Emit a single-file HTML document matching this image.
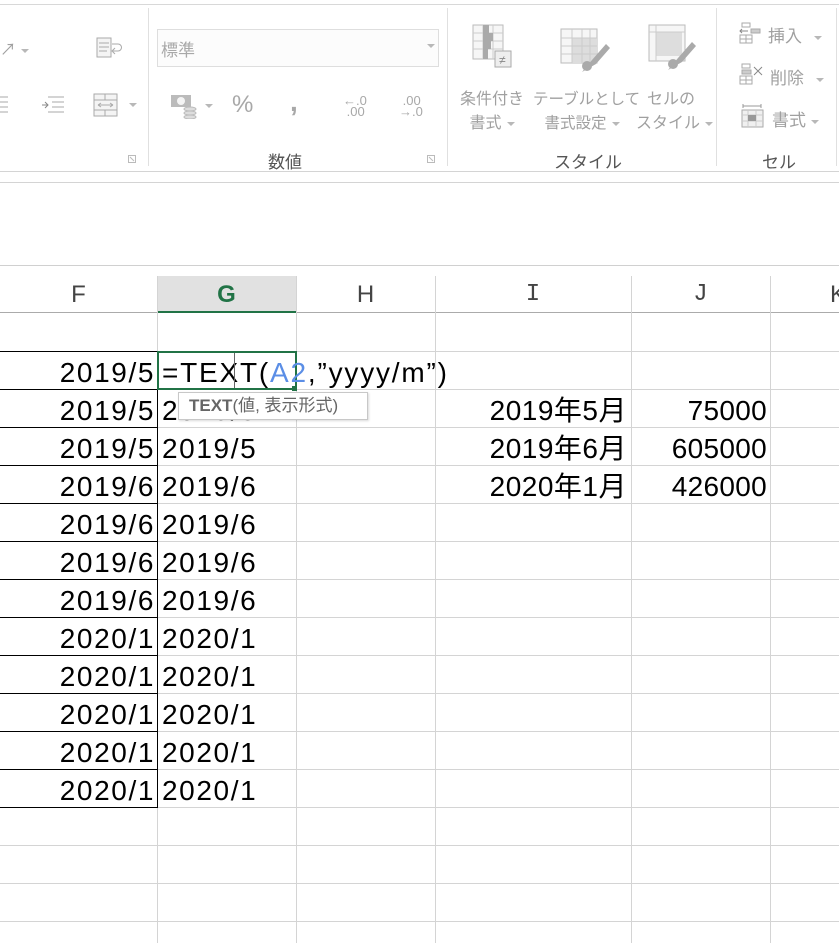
<!DOCTYPE html>
<html><head><meta charset="utf-8"><style>
*{margin:0;padding:0;box-sizing:border-box}
body{width:839px;height:943px;overflow:hidden;background:#fff;position:relative;font-family:"Liberation Sans","Noto Sans CJK JP",sans-serif}
.a{position:absolute}
.rb{color:#a0a0a0;font-size:16px;white-space:nowrap}
.hl{position:absolute;left:0;width:839px;height:1px;background:#d4d4d4}
.vl{position:absolute;width:1px;background:#d4d4d4}
.c{position:absolute;font-size:28px;color:#000;line-height:38px;white-space:nowrap;letter-spacing:1.6px}
.r{text-align:right}
.hd{position:absolute;top:276px;height:37px;line-height:37px;text-align:center;font-size:24px;color:#444}
.tri{display:inline-block;width:0;height:0;border-left:4px solid transparent;border-right:4px solid transparent;border-top:4px solid #b8b8b8;vertical-align:middle;margin-left:5px}
</style></head><body>
<div class="hl" style="top:4px;background:#d8d8d8"></div>
<div class="hl" style="top:171px;background:#d4d4d4"></div>
<div class="hl" style="top:182px;background:#d4d4d4"></div>
<div class="vl" style="left:148px;top:8px;height:158px;background:#e0e0e0"></div>
<div class="vl" style="left:447px;top:8px;height:158px;background:#e0e0e0"></div>
<div class="vl" style="left:716px;top:8px;height:158px;background:#e0e0e0"></div>
<div class="vl" style="left:836px;top:8px;height:158px;background:#e0e0e0"></div>
<div class="a rb" style="left:0;top:36px">↗<span class="tri"></span></div>
<svg class="a" style="left:96px;top:36px" width="28" height="24"><rect x="1" y="2" width="14" height="19" fill="#f4f4f4" stroke="#aaa"/><path d="M3 7h10M3 11h10M3 15h8M16 8h6a3 3 0 0 1 0 7h-5M19 12l-3 3 3 3" stroke="#aaa" fill="none"/></svg>
<svg class="a" style="left:0;top:94px" width="10" height="22"><path d="M0 3h8M0 8h8M0 13h8M0 18h8" stroke="#aaa"/></svg>
<svg class="a" style="left:40px;top:94px" width="26" height="22"><path d="M8 3h16M12 8h12M12 13h12M8 18h16" stroke="#aaa"/><path d="M2 11h6M5 8l3 3-3 3" stroke="#888" fill="none"/></svg>
<svg class="a" style="left:93px;top:93px" width="26" height="24"><rect x="1" y="1" width="23" height="22" fill="#f4f4f4" stroke="#aaa"/><path d="M1 7h23M1 17h23M12 1v6M12 17v6M5 12h15M5 12l3-2M5 12l3 2M20 12l-3-2M20 12l-3 2" stroke="#aaa" fill="none"/></svg>
<span class="a tri" style="left:124px;top:103px"></span>
<svg class="a" style="left:128px;top:155px" width="8" height="8"><path d="M0.5 0.5h7v7h-7z M2 2l4 4" stroke="#bbb" fill="none"/></svg>
<div class="a" style="left:157px;top:29px;width:282px;height:38px;border:1px solid #dedede;background:#fcfcfc"></div>
<div class="a rb" style="left:161px;top:36px;font-size:17px;color:#a8a8a8">標準</div>
<span class="a tri" style="left:422px;top:44px"></span>
<svg class="a" style="left:170px;top:93px" width="30" height="26"><rect x="1" y="2" width="20" height="12" fill="#bbb"/><circle cx="11" cy="8" r="4" fill="#f4f4f4"/><ellipse cx="20" cy="16" rx="6" ry="2" fill="#ddd" stroke="#bbb"/><ellipse cx="20" cy="20" rx="6" ry="2" fill="#ddd" stroke="#bbb"/><ellipse cx="20" cy="24" rx="6" ry="2" fill="#ddd" stroke="#bbb"/></svg>
<span class="a tri" style="left:200px;top:104px"></span>
<div class="a" style="left:232px;top:91px;font-size:24px;color:#a8a8a8">%</div>
<div class="a" style="left:290px;top:86px;font-size:28px;color:#a8a8a8;font-weight:bold">,</div>
<div class="a" style="left:343px;top:95px;font-size:13px;color:#a8a8a8;line-height:11px">←.0<br>&nbsp;.00</div>
<div class="a" style="left:399px;top:95px;font-size:13px;color:#a8a8a8;line-height:11px">&nbsp;.00<br>→.0</div>
<div class="a" style="left:268px;top:148px;font-size:17px;color:#555">数値</div>
<svg class="a" style="left:427px;top:155px" width="8" height="8"><path d="M0.5 0.5h7v7h-7z M2 2l4 4" stroke="#bbb" fill="none"/></svg>
<svg class="a" style="left:472px;top:24px" width="40" height="46"><rect x="1" y="1" width="30" height="34" fill="#f6f6f6" stroke="#bbb"/><path d="M1 9h30M1 17h30M1 25h30M11 1v34M21 1v34" stroke="#ccc"/><rect x="11" y="1" width="6" height="8" fill="#aaa"/><rect x="11" y="9" width="10" height="8" fill="#aaa"/><rect x="11" y="17" width="8" height="8" fill="#aaa"/><rect x="11" y="25" width="5" height="10" fill="#aaa"/><rect x="23" y="27" width="16" height="16" fill="#eee" stroke="#aaa"/><text x="27" y="40" font-size="12" fill="#888">≠</text></svg>
<svg class="a" style="left:560px;top:28px" width="50" height="46"><rect x="1" y="1" width="36" height="34" fill="#f6f6f6" stroke="#bbb"/><rect x="12" y="10" width="25" height="25" fill="#ddd"/><path d="M1 10h36M1 18h36M1 26h36M12 1v34M22 1v34M30 1v34" stroke="#ccc"/><path d="M22 44l10-12 14-16 4 4-14 16z" fill="#aaa"/><circle cx="27" cy="38" r="5" fill="#aaa"/></svg>
<svg class="a" style="left:648px;top:24px" width="50" height="46"><rect x="1" y="1" width="36" height="36" fill="#f6f6f6" stroke="#bbb"/><rect x="8" y="8" width="26" height="24" fill="#ddd"/><path d="M1 8h36M8 1v36" stroke="#ccc"/><path d="M20 46l10-12 14-16 4 4-14 16z" fill="#aaa"/><circle cx="25" cy="40" r="5" fill="#aaa"/></svg>
<div class="a rb" style="left:458px;top:88px;width:68px;line-height:24px;text-align:center">条件付き<br>書式<span class="tri"></span></div>
<div class="a rb" style="left:533px;top:88px;width:98px;line-height:24px;text-align:center;font-size:15.5px">テーブルとして<br>書式設定<span class="tri"></span></div>
<div class="a rb" style="left:636px;top:88px;width:70px;line-height:24px;text-align:center">セルの<br>スタイル<span class="tri"></span></div>
<div class="a" style="left:554px;top:148px;font-size:17px;color:#555">スタイル</div>
<svg class="a" style="left:739px;top:22px" width="24" height="22"><rect x="3" y="1" width="8" height="4" fill="none" stroke="#aaa"/><rect x="12" y="7" width="9" height="4" fill="#ccc" stroke="#aaa"/><path d="M1 9h8M3 7l-2 2 2 2" stroke="#888" fill="none"/><rect x="1" y="13" width="12" height="8" fill="none" stroke="#aaa"/><path d="M1 17h12M7 13v8" stroke="#aaa"/></svg>
<div class="a rb" style="left:768px;top:22px;font-size:17px">挿入<span class="tri" style="margin-left:12px"></span></div>
<svg class="a" style="left:739px;top:63px" width="26" height="22"><rect x="3" y="1" width="8" height="4" fill="none" stroke="#aaa"/><rect x="3" y="7" width="9" height="4" fill="#ccc" stroke="#aaa"/><path d="M15 4l8 8M23 4l-8 8" stroke="#888"/><rect x="1" y="13" width="12" height="8" fill="none" stroke="#aaa"/><path d="M1 17h12M7 13v8" stroke="#aaa"/></svg>
<div class="a rb" style="left:770px;top:64px;font-size:17px">削除<span class="tri" style="margin-left:12px"></span></div>
<svg class="a" style="left:740px;top:103px" width="26" height="26"><path d="M3 3h18M3 1v4M21 1v4" stroke="#999"/><rect x="2" y="7" width="21" height="17" fill="#f0f0f0" stroke="#aaa"/><path d="M2 12h21M2 18h21M8 7v17M16 7v17" stroke="#ccc"/><rect x="8" y="12" width="8" height="6" fill="#999"/></svg>
<div class="a rb" style="left:772px;top:106px;font-size:17px">書式<span class="tri"></span></div>
<div class="a" style="left:762px;top:148px;font-size:17px;color:#555">セル</div>

<div class="hl" style="top:265px;background:#d0d0d0"></div>
<div class="a" style="left:157px;top:276px;width:139px;height:37px;background:#e1e1e1"></div>
<div class="hl" style="top:312px;background:#ababab;height:1px"></div>
<div class="a" style="left:157px;top:311px;width:139px;height:2px;background:#217346"></div>
<div class="hd" style="left:0;width:157px">F</div>
<div class="hd" style="left:157px;width:139px;color:#217346;font-weight:bold">G</div>
<div class="hd" style="left:296px;width:139px">H</div>
<div class="hd" style="left:435px;width:196px;font-family:'Liberation Mono',monospace">I</div>
<div class="hd" style="left:631px;width:139px;font-family:'Liberation Mono',monospace">J</div>
<div class="hd" style="left:770px;width:100px;text-align:left;padding-left:60px">K</div>
<div class="vl" style="left:157px;top:276px;height:667px"></div>
<div class="vl" style="left:296px;top:276px;height:667px"></div>
<div class="vl" style="left:435px;top:276px;height:667px"></div>
<div class="vl" style="left:631px;top:276px;height:667px"></div>
<div class="vl" style="left:770px;top:276px;height:667px"></div>
<div class="hl" style="top:351px"></div><div class="hl" style="top:389px"></div><div class="hl" style="top:427px"></div><div class="hl" style="top:465px"></div><div class="hl" style="top:503px"></div><div class="hl" style="top:541px"></div><div class="hl" style="top:579px"></div><div class="hl" style="top:617px"></div><div class="hl" style="top:655px"></div><div class="hl" style="top:693px"></div><div class="hl" style="top:731px"></div><div class="hl" style="top:769px"></div><div class="hl" style="top:807px"></div><div class="hl" style="top:845px"></div><div class="hl" style="top:883px"></div><div class="hl" style="top:921px"></div>
<div class="a" style="left:0;top:351px;width:158px;height:457px;border-right:1px solid #000;border-top:1px solid #000;background:repeating-linear-gradient(to bottom,transparent 0,transparent 37px,#000 37px,#000 38px)"></div>
<div class="c r" style="left:0;width:155px;top:354px">2019/5</div>
<div class="c r" style="left:0;width:155px;top:392px">2019/5</div>
<div class="c r" style="left:0;width:155px;top:430px">2019/5</div>
<div class="c r" style="left:0;width:155px;top:468px">2019/6</div>
<div class="c r" style="left:0;width:155px;top:506px">2019/6</div>
<div class="c r" style="left:0;width:155px;top:544px">2019/6</div>
<div class="c r" style="left:0;width:155px;top:582px">2019/6</div>
<div class="c r" style="left:0;width:155px;top:620px">2020/1</div>
<div class="c r" style="left:0;width:155px;top:658px">2020/1</div>
<div class="c r" style="left:0;width:155px;top:696px">2020/1</div>
<div class="c r" style="left:0;width:155px;top:734px">2020/1</div>
<div class="c r" style="left:0;width:155px;top:772px">2020/1</div>
<div class="c" style="left:162px;top:392px">2019/5</div>
<div class="c" style="left:162px;top:430px">2019/5</div>
<div class="c" style="left:162px;top:468px">2019/6</div>
<div class="c" style="left:162px;top:506px">2019/6</div>
<div class="c" style="left:162px;top:544px">2019/6</div>
<div class="c" style="left:162px;top:582px">2019/6</div>
<div class="c" style="left:162px;top:620px">2020/1</div>
<div class="c" style="left:162px;top:658px">2020/1</div>
<div class="c" style="left:162px;top:696px">2020/1</div>
<div class="c" style="left:162px;top:734px">2020/1</div>
<div class="c" style="left:162px;top:772px">2020/1</div>
<div class="a" style="left:157px;top:351px;width:140px;height:39px;border:2px solid #217346;background:#fff"></div>
<div class="a" style="left:292px;top:386px;width:5px;height:5px;background:#217346"></div>
<div class="c" style="left:162px;top:354px;letter-spacing:1.8px">=TEXT(<span style="color:#5b8ee6">A2</span>,”yyyy/m”)</div>
<div class="a" style="left:234px;top:353px;width:1px;height:35px;background:#666"></div>
<div class="a" style="left:178px;top:392px;width:190px;height:28px;border:1px solid #c8c8c8;background:#fff;box-shadow:1px 1px 2px rgba(0,0,0,.15);font-size:17px;color:#666;line-height:26px;padding-left:10px;white-space:nowrap"><b>TEXT</b>(値, 表示形式)</div>
<div class="c r" style="left:435px;width:192px;top:392px;letter-spacing:0.5px">2019年5月</div>
<div class="c r" style="left:435px;width:192px;top:430px;letter-spacing:0.5px">2019年6月</div>
<div class="c r" style="left:435px;width:192px;top:468px;letter-spacing:0.5px">2020年1月</div>
<div class="c r" style="left:631px;width:136px;top:392px;letter-spacing:0.3px">75000</div>
<div class="c r" style="left:631px;width:136px;top:430px;letter-spacing:0.3px">605000</div>
<div class="c r" style="left:631px;width:136px;top:468px;letter-spacing:0.3px">426000</div>
</body></html>
